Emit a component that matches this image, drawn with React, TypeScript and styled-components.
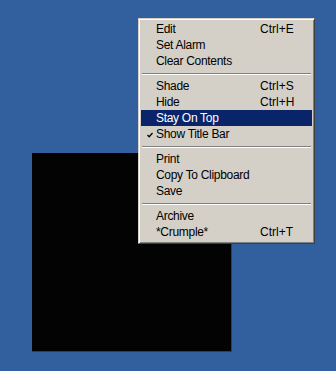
import React from "react";
import styled, { createGlobalStyle } from "styled-components";

const Global = createGlobalStyle`
  html, body {
    margin: 0;
    padding: 0;
    background: #32609f;
  }
  #root {
    width: 336px;
    height: 371px;
  }
`;

const Desktop = styled.div`
  position: relative;
  width: 336px;
  height: 371px;
  overflow: hidden;
  background: #32609f;
`;

const Window = styled.div`
  position: absolute;
  left: 32px;
  top: 153px;
  width: 199px;
  height: 198px;
  background: #030303;
  border-right: 1px solid #3c3c44;
  border-bottom: 1px solid #3c3c44;
`;

const Menu = styled.div`
  position: absolute;
  left: 138px;
  top: 18px;
  width: 177px;
  box-sizing: border-box;
  padding: 2px 2px 3px 2px;
  background: #d4d0c8;
  border: 1px solid;
  border-color: #d4d0c8 #404040 #404040 #d4d0c8;
  box-shadow: inset 1px 1px #ffffff, inset -1px -1px #808080;
  font-family: "Liberation Sans", Arial, sans-serif;
  font-size: 12px;
  letter-spacing: -0.3px;
  color: #000;
`;

const Item = styled.div<{ $active?: boolean }>`
  display: grid;
  grid-template-columns: 15px 104px 1fr;
  align-items: center;
  height: 16px;
  line-height: 16px;
  white-space: nowrap;
  background: ${(p) => (p.$active ? "#0a246a" : "transparent")};
  color: ${(p) => (p.$active ? "#fff" : "#000")};
`;

const Check = styled.span`
  display: flex;
  align-items: center;
  padding: 2px 0 0 6px;
`;

const Shortcut = styled.span`
  letter-spacing: 0;
`;

const Separator = styled.div`
  height: 9px;
  display: flex;
  align-items: center;
  padding: 0 1px;
  &::after {
    content: "";
    flex: 1;
    height: 0;
    border-top: 1px solid #808080;
    border-bottom: 1px solid #ffffff;
  }
`;

type Entry =
  | { label: string; shortcut?: string; checked?: boolean; active?: boolean }
  | "sep";

const entries: Entry[] = [
  { label: "Edit", shortcut: "Ctrl+E" },
  { label: "Set Alarm" },
  { label: "Clear Contents" },
  "sep",
  { label: "Shade", shortcut: "Ctrl+S" },
  { label: "Hide", shortcut: "Ctrl+H" },
  { label: "Stay On Top", active: true },
  { label: "Show Title Bar", checked: true },
  "sep",
  { label: "Print" },
  { label: "Copy To Clipboard" },
  { label: "Save" },
  "sep",
  { label: "Archive" },
  { label: "*Crumple*", shortcut: "Ctrl+T" },
];

const CheckMark = () => (
  <svg width="6" height="6" viewBox="0 0 6 6">
    <path d="M0.5 3 L2.2 4.8 L5.5 1" stroke="#000" strokeWidth="1.3" fill="none" />
  </svg>
);

export default function App() {
  return (
    <Desktop>
      <Global />
      <Window />
      <Menu>
        {entries.map((e, i) =>
          e === "sep" ? (
            <Separator key={i} />
          ) : (
            <Item key={i} $active={e.active}>
              <Check>{e.checked && <CheckMark />}</Check>
              <span>{e.label}</span>
              <Shortcut>{e.shortcut}</Shortcut>
            </Item>
          )
        )}
      </Menu>
    </Desktop>
  );
}
